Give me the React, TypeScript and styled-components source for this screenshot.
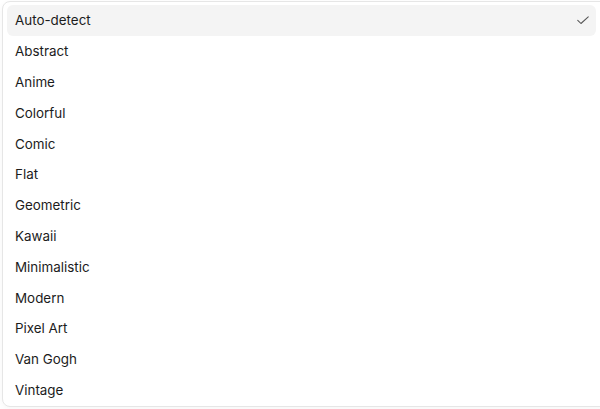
import React from 'react';
import styled, { createGlobalStyle } from 'styled-components';

const GlobalStyle = createGlobalStyle`
  html, body {
    margin: 0;
    padding: 0;
    background: #ffffff;
  }
  body {
    font-family: Inter, "Noto Sans", "Liberation Sans", sans-serif;
    -webkit-font-smoothing: antialiased;
  }
`;

const Page = styled.div`
  width: 600px;
  height: 409px;
  overflow: hidden;
  padding: 1px 0 0 2px;
  box-sizing: border-box;
`;

const Menu = styled.ul`
  list-style: none;
  margin: 0;
  width: 606px;
  padding: 3px 4px 1px 4px;
  box-sizing: border-box;
  border: 1px solid #e6e6e6;
  border-radius: 8px;
  background: #ffffff;
  box-shadow: 0 2px 6px rgba(0, 0, 0, 0.04);
`;

const Item = styled.li<{ $selected?: boolean }>`
  display: flex;
  align-items: center;
  justify-content: space-between;
  height: 30.8px;
  padding: 0 6px 0 8px;
  margin-right: 7px;
  border-radius: 6px;
  background: ${(p) => (p.$selected ? '#f4f4f4' : 'transparent')};
  font-size: 13.4px;
  color: #1c1c1c;
  cursor: default;
`;

const Check = () => (
  <svg width="14" height="14" viewBox="0 0 24 24" fill="none" stroke="#555" strokeWidth="1.8" strokeLinecap="round" strokeLinejoin="round">
    <path d="M3 12.5l5.5 5.5L21 6.5" />
  </svg>
);

const styles = [
  'Auto-detect',
  'Abstract',
  'Anime',
  'Colorful',
  'Comic',
  'Flat',
  'Geometric',
  'Kawaii',
  'Minimalistic',
  'Modern',
  'Pixel Art',
  'Van Gogh',
  'Vintage',
];

export default function App() {
  return (
    <>
      <GlobalStyle />
      <Page>
        <Menu>
          {styles.map((s, i) => (
            <Item key={s} $selected={i === 0}>
              <span>{s}</span>
              {i === 0 && <Check />}
            </Item>
          ))}
        </Menu>
      </Page>
    </>
  );
}
